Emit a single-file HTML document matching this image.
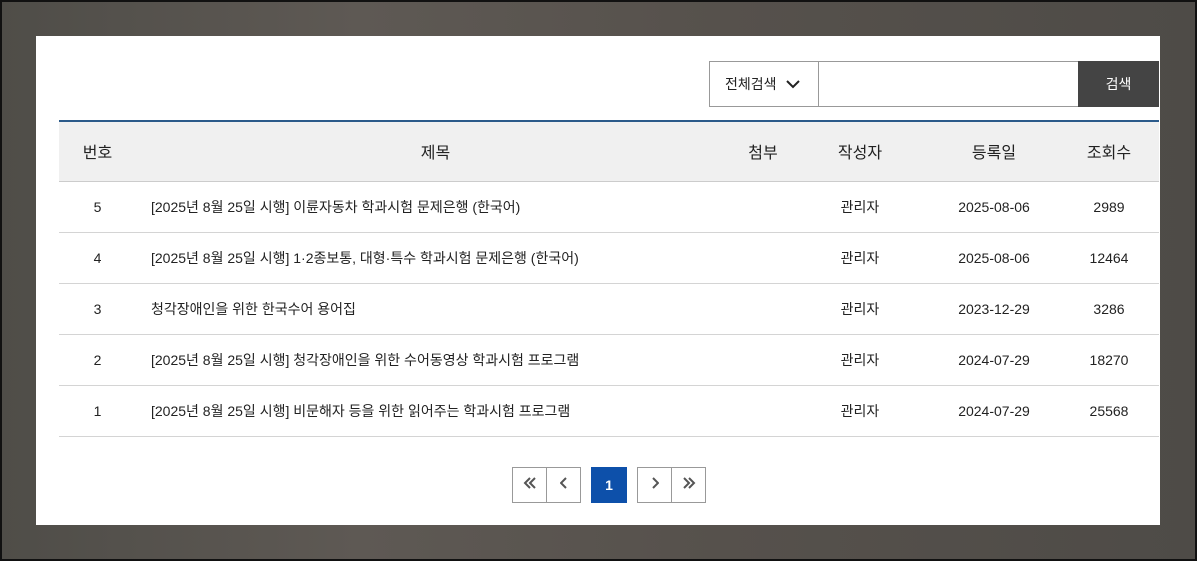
<!DOCTYPE html>
<html><head><meta charset="utf-8"><style>
*{margin:0;padding:0;box-sizing:border-box}
body{width:1197px;height:561px;overflow:hidden;background:linear-gradient(90deg,#4f4d48,#5e5954 30%,#56514c 60%,#4e4b47);border:2px solid #111;font-family:"Liberation Sans","Noto Sans CJK KR",sans-serif;color:#222;position:relative}
.panel{position:absolute;left:34px;top:34px;width:1124px;height:489px;background:#fff}
.abs{position:absolute}
.sel{left:673px;top:25px;width:110px;height:46px;border:1px solid #999;font-size:14px;line-height:44px;padding-left:15px;color:#222}
.inp{left:782px;top:25px;width:261px;height:46px;border:1px solid #999;border-left:none}
.btn{left:1042px;top:25px;width:81px;height:46px;background:#444;color:#fff;font-size:14px;line-height:46px;text-align:center}
table{position:absolute;left:23px;top:84px;width:1100px;border-collapse:collapse;font-size:14px}
thead tr{background:#f0f0f0;height:60px;border-top:2px solid #2b5a8a;border-bottom:1px solid #ccc;font-size:16px}
tbody tr{height:51px;border-bottom:1px solid #d4d4d4}
td,th{font-weight:normal;text-align:center}
td.t{text-align:left;padding-left:15px}
.pg{position:absolute;top:431px;height:36px;border:1px solid #999;color:#555;text-align:center;line-height:34px;font-size:15px}
</style></head><body>
<div class="panel">
<div class="abs sel">전체검색 <svg width="14" height="10" style="margin-left:6px" viewBox="0 0 14 10"><path d="M1 2l6 6 6-6" stroke="#222" stroke-width="2" fill="none"/></svg></div>
<div class="abs inp"></div>
<div class="abs btn">검색</div>
<table>
<colgroup><col style="width:77px"><col style="width:599px"><col style="width:56px"><col style="width:138px"><col style="width:130px"><col></colgroup>
<thead><tr><th>번호</th><th>제목</th><th>첨부</th><th>작성자</th><th>등록일</th><th>조회수</th></tr></thead>
<tbody>
<tr><td>5</td><td class="t">[2025년 8월 25일 시행] 이륜자동차 학과시험 문제은행 (한국어)</td><td></td><td>관리자</td><td>2025-08-06</td><td>2989</td></tr>
<tr><td>4</td><td class="t">[2025년 8월 25일 시행] 1·2종보통, 대형·특수 학과시험 문제은행 (한국어)</td><td></td><td>관리자</td><td>2025-08-06</td><td>12464</td></tr>
<tr><td>3</td><td class="t">청각장애인을 위한 한국수어 용어집</td><td></td><td>관리자</td><td>2023-12-29</td><td>3286</td></tr>
<tr><td>2</td><td class="t">[2025년 8월 25일 시행] 청각장애인을 위한 수어동영상 학과시험 프로그램</td><td></td><td>관리자</td><td>2024-07-29</td><td>18270</td></tr>
<tr><td>1</td><td class="t">[2025년 8월 25일 시행] 비문해자 등을 위한 읽어주는 학과시험 프로그램</td><td></td><td>관리자</td><td>2024-07-29</td><td>25568</td></tr>
</tbody></table>
<div class="pg" style="left:476px;width:35px"><svg width="14" height="12" viewBox="0 0 14 12"><path d="M7 1L2 6l5 5M12 1L7 6l5 5" stroke="#555" stroke-width="2" fill="none"/></svg></div>
<div class="pg" style="left:510px;width:35px"><svg width="8" height="12" viewBox="0 0 8 12"><path d="M6 1L1 6l5 5" stroke="#555" stroke-width="2" fill="none"/></svg></div>
<div class="pg" style="left:555px;width:36px;background:#0d50aa;border-color:#0d50aa;color:#fff;font-weight:bold;font-size:14px">1</div>
<div class="pg" style="left:601px;width:35px"><svg width="8" height="12" viewBox="0 0 8 12"><path d="M2 1l5 5-5 5" stroke="#555" stroke-width="2" fill="none"/></svg></div>
<div class="pg" style="left:635px;width:35px"><svg width="14" height="12" viewBox="0 0 14 12"><path d="M2 1l5 5-5 5M7 1l5 5-5 5" stroke="#555" stroke-width="2" fill="none"/></svg></div>
</div>
</body></html>
